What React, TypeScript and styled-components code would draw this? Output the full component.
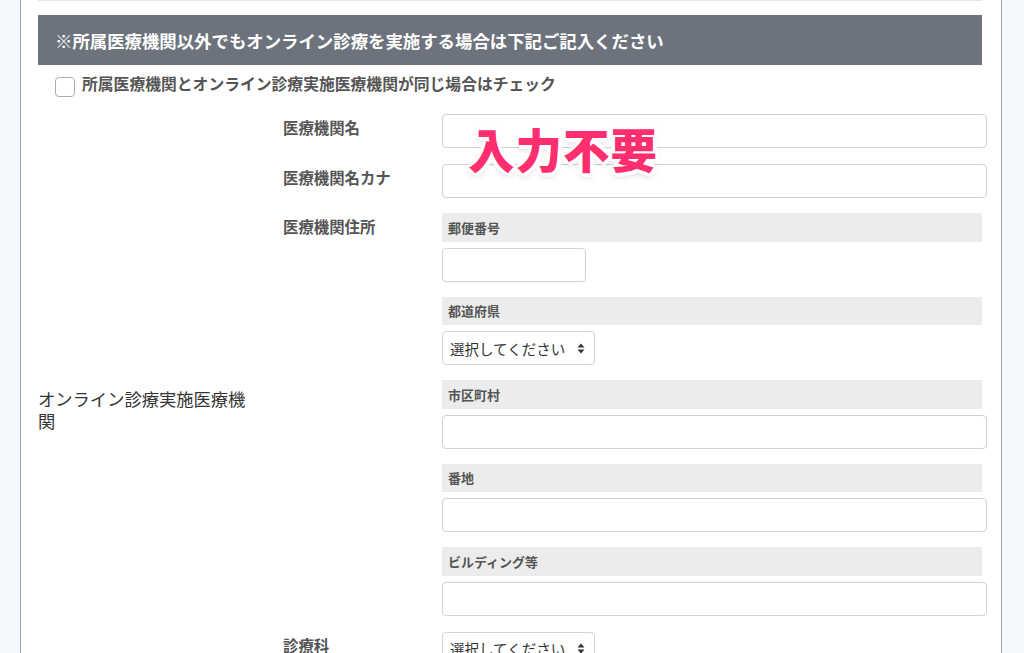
import React from "react";
import styled, { createGlobalStyle } from "styled-components";

const GlobalStyle = createGlobalStyle`
  html, body {
    margin: 0;
    padding: 0;
    background: #f4f8fc;
    font-family: "Noto Sans CJK JP", "Noto Sans", sans-serif;
    color: #333;
  }
`;

const Page = styled.div`
  min-height: 653px;
  padding: 0 22px 0 20px;
  background: #f4f8fc;
  overflow: hidden;
`;

const Card = styled.div`
  min-height: 653px;
  background: #fff;
  border-left: 1px solid #9da1a6;
  border-right: 1px solid #9da1a6;
  padding: 0 14px 0 17px;
`;

const TopRule = styled.div`
  height: 1px;
  margin-right: 5px;
  background: #e6e6e6;
`;

const SectionHeader = styled.div`
  margin: 14px 5px 0 0;
  height: 50px;
  display: flex;
  align-items: center;
  padding-left: 17px;
  background: #6c737c;
  color: #fff;
  font-size: 17.4px;
  font-weight: 700;
`;

const CheckRow = styled.label`
  display: flex;
  align-items: flex-start;
  gap: 7px;
  margin: 8px 0 0 17px;
  font-size: 15.8px;
  font-weight: 700;
  color: #555;
  line-height: 22px;
`;

const CheckBox = styled.span`
  width: 18px;
  height: 18px;
  margin-top: 4px;
  border: 1px solid #a9adb2;
  border-radius: 4px;
  background: #fff;
`;

const Section = styled.div`
  position: relative;
  display: grid;
  grid-template-columns: 245px 1fr;
  margin-top: 17px;
`;

const MainLabel = styled.div`
  align-self: center;
  max-width: 215px;
  font-size: 17.3px;
  line-height: 22px;
  color: #333;
`;

const Fields = styled.div`
  display: flex;
  flex-direction: column;
  gap: 16px;
  padding-bottom: 40px;
`;

const FieldRow = styled.div<{ $tight?: boolean }>`
  display: grid;
  grid-template-columns: 159px 1fr;
  margin-top: ${(p) => (p.$tight ? "-1px" : "0")};
`;

const FieldLabel = styled.div`
  padding-top: 1px;
  font-size: 15.4px;
  line-height: 24px;
  font-weight: 700;
  color: #555;
`;

const TextInput = styled.input<{ $width?: number }>`
  box-sizing: border-box;
  width: ${(p) => (p.$width ? `${p.$width}px` : "100%")};
  height: 34px;
  margin: 0;
  border: 1px solid #cdd2d8;
  border-radius: 4px;
  background: #fff;
  outline: none;
`;

const SelectBox = styled.div`
  box-sizing: border-box;
  width: 153px;
  height: 34px;
  display: flex;
  align-items: center;
  justify-content: space-between;
  padding: 0 9px 0 7px;
  border: 1px solid #cdd2d8;
  border-radius: 4px;
  background: #fff;
  font-size: 14.5px;
  color: #333;
`;

const AddressList = styled.div`
  display: flex;
  flex-direction: column;
  gap: 15px;
`;

const AddressItem = styled.div`
  display: flex;
  flex-direction: column;
  gap: 6px;
`;

const SubBar = styled.div`
  height: 28.5px;
  margin-right: 5px;
  display: flex;
  align-items: center;
  padding-left: 6px;
  background: #ececec;
  font-size: 13px;
  font-weight: 700;
  color: #555;
`;

const Stamp = styled.div`
  position: absolute;
  left: 430px;
  top: 8px;
  font-size: 46.5px;
  line-height: 52px;
  font-weight: 900;
  letter-spacing: 1px;
  color: #ff2e6e;
  pointer-events: none;
  text-shadow:
    3px 0 0 #fff, -3px 0 0 #fff, 0 3px 0 #fff, 0 -3px 0 #fff,
    2px 2px 0 #fff, -2px 2px 0 #fff, 2px -2px 0 #fff, -2px -2px 0 #fff,
    4px 1px 0 #fff, -4px 1px 0 #fff, 1px 4px 0 #fff, 1px -4px 0 #fff,
    0 3px 6px rgba(0, 0, 0, 0.25);
`;

const SortIcon = () => (
  <svg width="8" height="11" viewBox="0 0 8 11" aria-hidden>
    <path d="M4 0.5 L7.5 4.5 H0.5 Z" fill="#333" />
    <path d="M4 10.5 L7.5 6.5 H0.5 Z" fill="#333" />
  </svg>
);

const Select = () => (
  <SelectBox>
    <span>選択してください</span>
    <SortIcon />
  </SelectBox>
);

const addressFields = [
  { label: "郵便番号", kind: "short" },
  { label: "都道府県", kind: "select" },
  { label: "市区町村", kind: "full" },
  { label: "番地", kind: "full" },
  { label: "ビルディング等", kind: "full" },
];

export default function App() {
  return (
    <>
      <GlobalStyle />
      <Page>
        <Card>
          <TopRule />
          <SectionHeader>
            ※所属医療機関以外でもオンライン診療を実施する場合は下記ご記入ください
          </SectionHeader>
          <CheckRow>
            <CheckBox />
            所属医療機関とオンライン診療実施医療機関が同じ場合はチェック
          </CheckRow>
          <Section>
            <MainLabel>オンライン診療実施医療機関</MainLabel>
            <Fields>
              <FieldRow>
                <FieldLabel>医療機関名</FieldLabel>
                <TextInput />
              </FieldRow>
              <FieldRow>
                <FieldLabel>医療機関名カナ</FieldLabel>
                <TextInput />
              </FieldRow>
              <FieldRow $tight>
                <FieldLabel>医療機関住所</FieldLabel>
                <AddressList>
                  {addressFields.map((f) => (
                    <AddressItem key={f.label}>
                      <SubBar>{f.label}</SubBar>
                      {f.kind === "select" ? (
                        <Select />
                      ) : f.kind === "short" ? (
                        <TextInput $width={144} />
                      ) : (
                        <TextInput />
                      )}
                    </AddressItem>
                  ))}
                </AddressList>
              </FieldRow>
              <FieldRow>
                <FieldLabel>診療科</FieldLabel>
                <Select />
              </FieldRow>
            </Fields>
            <Stamp>入力不要</Stamp>
          </Section>
        </Card>
      </Page>
    </>
  );
}
